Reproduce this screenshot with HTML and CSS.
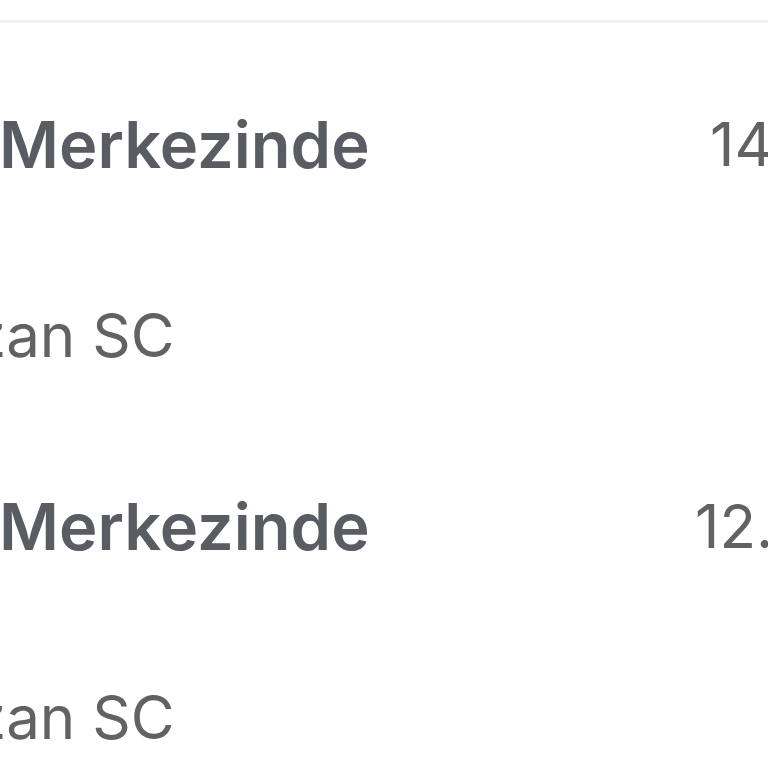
FILE: index.html
```html
<!doctype html>
<html>
<head>
<meta charset="utf-8">
<title>list</title>
<link rel="stylesheet" href="styles.css">
</head>
<body>
	<div class="head"></div>
	<ul class="list">
		<li class="item">
			<div class="info">
				<div class="title">Merkezinde</div>
				<div class="sub">zan SC</div>
			</div>
			<div class="num first">14</div>
		</li>
		<li class="item">
			<div class="info">
				<div class="title">Merkezinde</div>
				<div class="sub">zan SC</div>
			</div>
			<div class="num">12.</div>
		</li>
	</ul>
</body>
</html>
```

FILE: styles.css
```css
*{margin:0;padding:0;list-style:none;}
html, body{
	width:768px;
	height:768px;
	overflow:hidden;
	background:#fff;
}
body{
	font-family:Inter, "Liberation Sans", sans-serif;
	color:#626262;
}
.head{
	height:20px;
	border-bottom:3px solid #f3f3f3;
}
.list{
	padding-top:26px;
}
.item{
	display:flex;
	justify-content:space-between;
}
.info{
	flex:1;
	overflow:hidden;
}
.title{
	font-size:65px;
	line-height:191px;
	font-weight:600;
	color:#595c63;
	white-space:nowrap;
	margin-left:-1px;
}
.sub{
	font-size:60px;
	line-height:191px;
	white-space:nowrap;
	margin-left:-27px;
}
.num{
	width:73px;
	font-size:60px;
	line-height:191px;
	white-space:nowrap;
	overflow:hidden;
}
.num.first{
	padding-left:15px;
	width:58px;
}
```
